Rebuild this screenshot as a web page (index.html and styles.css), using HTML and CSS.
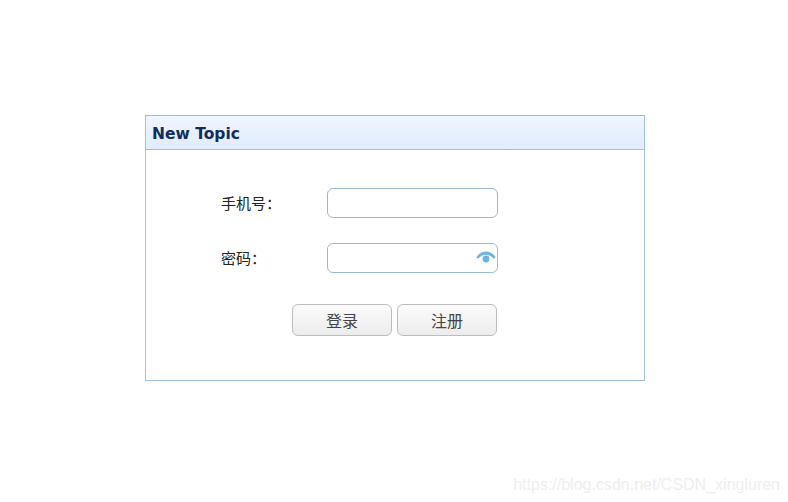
FILE: index.html
```html
<!DOCTYPE html>
<html lang="zh">
<head>
<meta charset="utf-8">
<title>New Topic</title>
<link rel="stylesheet" href="styles.css">
</head>
<body>
<section class="panel">
  <h1 class="panel-title">New Topic</h1>
  <form class="panel-body">
    <div class="row">
      <label class="label"><span class="label-text">手机号：</span></label>
      <div class="field"></div>
    </div>
    <div class="row">
      <label class="label"><span class="label-text">密码：</span></label>
      <div class="field">
        <svg class="eye" viewBox="0 0 20 12" width="20" height="12" aria-hidden="true">
          <path d="M0.3 6.2C3 2.4 6.3 0.4 10 0.4s7 2 9.7 5.8l-1.9 1.6C15.6 5.2 13 3.8 10 3.8S4.4 5.2 2.2 7.8z" fill="#6cb2e4"/>
          <circle cx="10" cy="8" r="3.4" fill="#6cb2e4"/>
        </svg>
      </div>
    </div>
    <div class="actions">
      <button type="button" class="btn"><span class="btn-text">登录</span></button>
      <button type="button" class="btn"><span class="btn-text">注册</span></button>
    </div>
  </form>
</section>
<div class="watermark">https://blog.csdn.net/CSDN_xingluren</div>
</body>
</html>
```
FILE: styles.css
```css
html, body {
  margin: 0;
  height: 100%;
  background: #fff;
}
body {
  padding: 115px 0 0 145px;
  box-sizing: border-box;
  overflow: hidden;
  position: relative;
  font-family: "Liberation Sans", "Noto Sans CJK SC", sans-serif;
}
.panel {
  width: 500px;
  height: 266px;
  box-sizing: border-box;
  border: 1px solid #9dbfe0;
}
.panel-title {
  margin: 0;
  height: 33px;
  padding-left: 6px;
  border-bottom: 1px solid #9dbfe0;
  background: linear-gradient(to bottom, #eff5fe, #e0ecfd);
  font-family: "DejaVu Sans", sans-serif;
  font-size: 15.5px;
  font-weight: 700;
  line-height: 36px;
  color: #122c5c;
}
.panel-body {
  display: flex;
  flex-direction: column;
  padding-top: 38px;
}
.row {
  display: flex;
  align-items: center;
  height: 30px;
  margin-bottom: 25px;
  padding-left: 75px;
}
.label {
  width: 106px;
  font-size: 15px;
  line-height: 30px;
  height: 30px;
  color: #222;
  font-family: "Noto Sans CJK SC", sans-serif;
}
.label-text {
  display: block;
}
.field {
  position: relative;
  width: 171px;
  height: 30px;
  box-sizing: border-box;
  border: 1px solid #98b8d2;
  border-radius: 6px;
  background: #fff;
}
.eye {
  position: absolute;
  right: 1px;
  top: 7px;
}
.actions {
  display: flex;
  gap: 5px;
  padding: 6px 0 0 146px;
}
.btn {
  width: 100px;
  height: 32px;
  padding: 0 0 1px;
  box-sizing: border-box;
  border: 1px solid #bdbdbd;
  border-radius: 6px;
  background: linear-gradient(to bottom, #fbfbfb, #ececec);
  font-family: "Noto Sans CJK SC", sans-serif;
  font-size: 16px;
  color: #444;
}
.watermark {
  position: absolute;
  right: 8px;
  bottom: 8px;
  font-size: 16px;
  color: #eeeeee;
  white-space: nowrap;
}
```
